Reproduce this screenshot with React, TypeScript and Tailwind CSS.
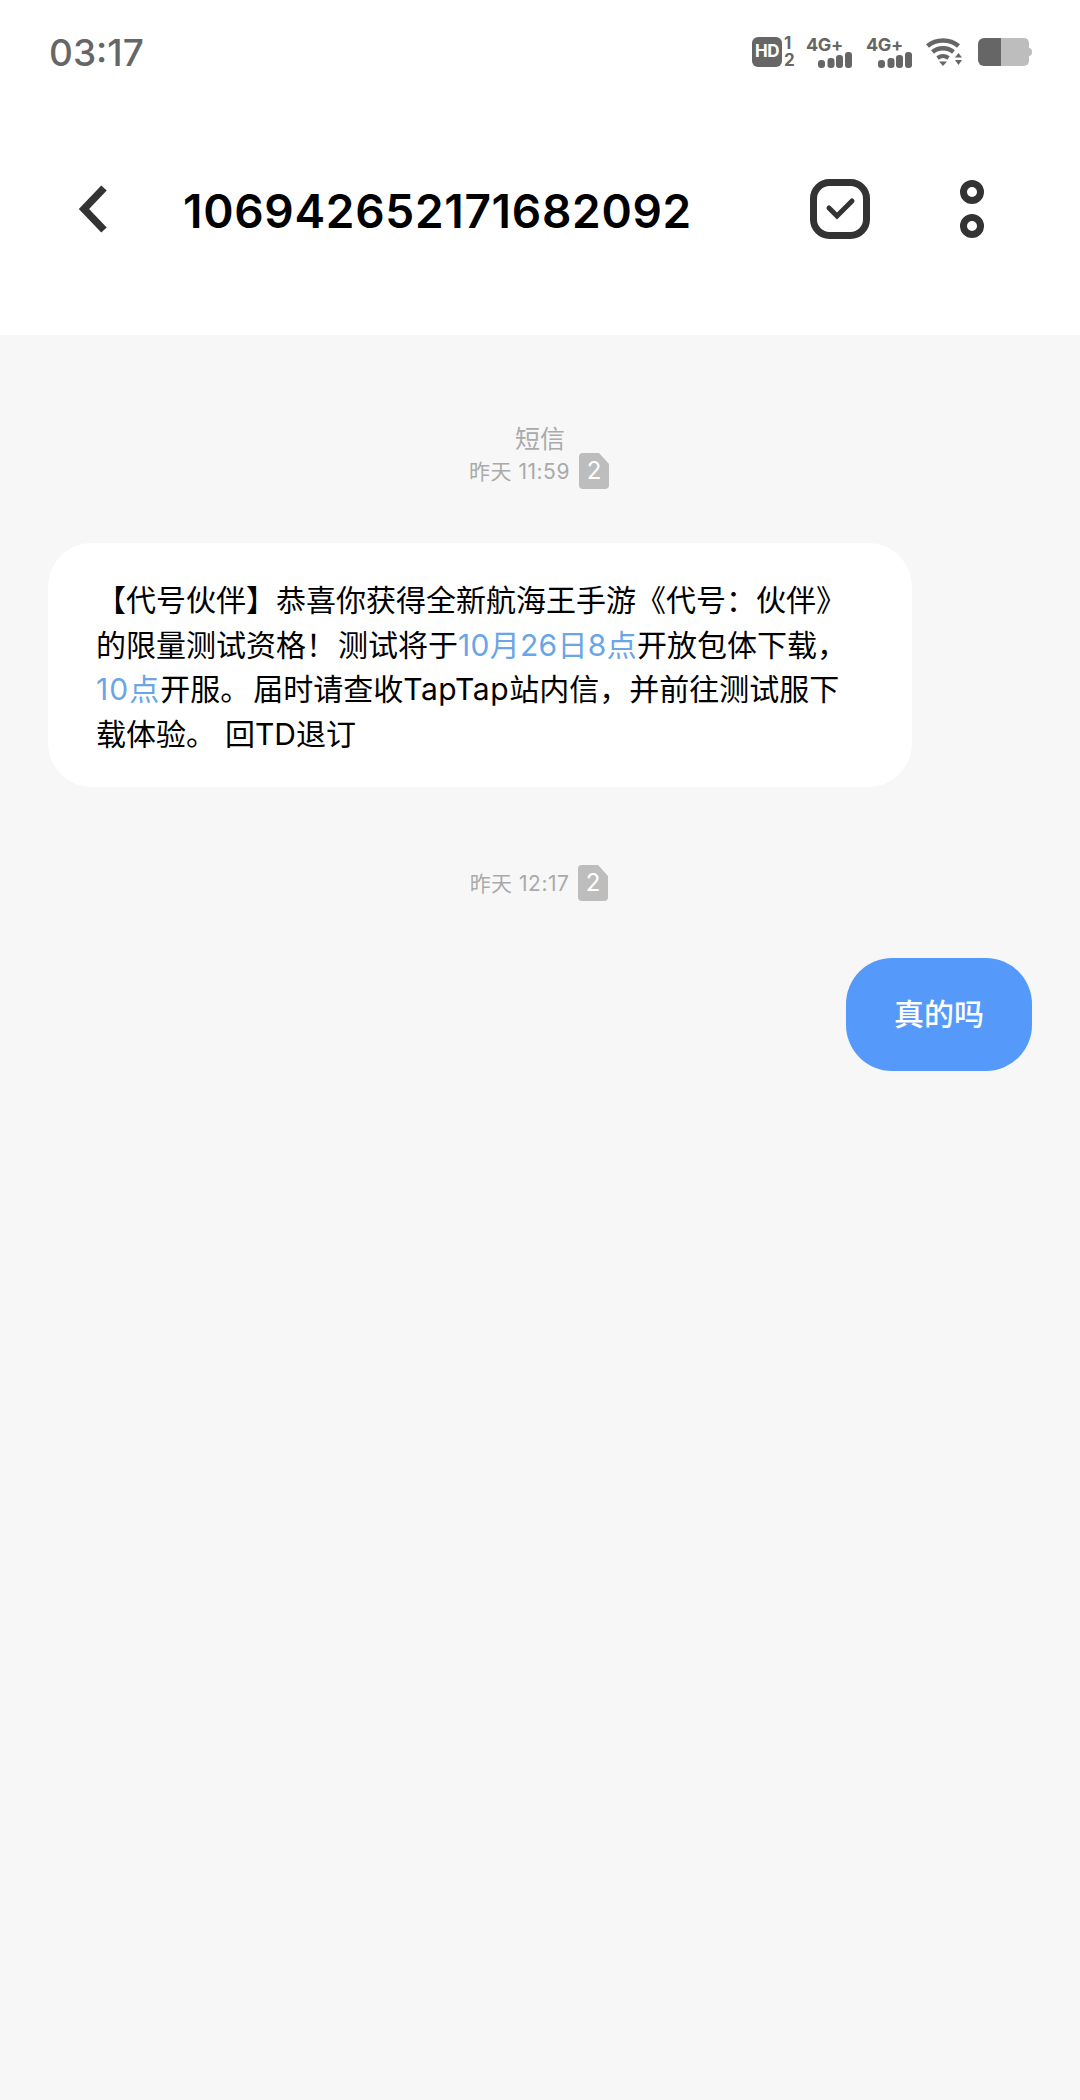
const cjk = "font-['Inter','Noto_Sans_CJK_SC',sans-serif] [text-spacing-trim:space-all]";

const SimBadge = () => (
  <svg width="30" height="36" viewBox="0 0 30 36" className="block">
    <path d="M4 0H20L30 11V32a4 4 0 0 1-4 4H4a4 4 0 0 1-4-4V4a4 4 0 0 1 4-4Z" fill="#bdbdbd" />
    <text x="15" y="26" textAnchor="middle" fontSize="24" fill="#fff" fontFamily="Inter, sans-serif">2</text>
  </svg>
);

const Signal = () => (
  <div className="flex flex-col w-[46px]">
    <span className="text-[18px] leading-[15px] font-bold text-[#666] font-['Inter',sans-serif] tracking-[-0.4px]">4G+</span>
    <svg width="46" height="16" viewBox="0 0 46 16" className="block">
      <rect x="12" y="8" width="7" height="8" rx="3" fill="#666" />
      <rect x="21.500" y="6" width="7" height="10" rx="3" fill="#666" />
      <rect x="30" y="3" width="7" height="13" rx="3" fill="#666" />
      <rect x="39" y="0" width="7" height="16" rx="3" fill="#666" />
    </svg>
  </div>
);

const StatusBar = () => (
  <div className="h-[104px] pl-[49px] pr-[48px] flex items-center justify-between bg-white">
    <span className="text-[37px] font-medium text-[#666] leading-none font-['Inter',sans-serif]">03:17</span>
    <div className="flex items-center">
      <div className="w-[30px] h-[30px] rounded-[6px] bg-[#666] text-white text-[17px] font-bold flex items-center justify-center font-['Inter',sans-serif] tracking-[-0.5px]">HD</div>
      <div className="w-[12px] ml-[2px] flex flex-col text-[17px] leading-[17px] font-bold text-[#666] font-['Inter',sans-serif]">
        <span>1</span>
        <span>2</span>
      </div>
      <div className="ml-[10px]"><Signal /></div>
      <div className="ml-[14px]"><Signal /></div>
      <svg width="38" height="28" viewBox="0 0 38 28" className="ml-[13px] block">
        <path d="M2.500 8C11 0.500 25 0.500 33.500 8" fill="none" stroke="#666" strokeWidth="4.500" />
        <path d="M7.500 14C13.500 9 22.500 9 28.500 14" fill="none" stroke="#666" strokeWidth="4.500" />
        <path d="M12.500 20C16 17.500 20 17.500 23.500 20" fill="none" stroke="#666" strokeWidth="4" />
        <path d="M14 23.500H22L18 28Z" fill="#666" />
        <path d="M33.500 15L37 19.500H30Z" fill="#666" />
        <path d="M30 22H37L33.500 27Z" fill="#666" />
      </svg>
      <svg width="54" height="28" viewBox="0 0 54 28" className="ml-[15px] block">
        <path d="M6 0H23V28H6a6 6 0 0 1-6-6V6a6 6 0 0 1 6-6Z" fill="#666" />
        <path d="M23 0H46a5 5 0 0 1 5 5V23a5 5 0 0 1-5 5H23Z" fill="#bdbdbd" />
        <path d="M51 10a3 4 0 0 1 3 4a3 4 0 0 1-3 4Z" fill="#bdbdbd" />
      </svg>
    </div>
  </div>
);

const Header = () => (
  <div className="h-[231px] pb-[22px] flex items-center bg-white">
    <svg width="32" height="48" viewBox="0 0 32 48" className="ml-[78px] block">
      <path d="M26 3L6 24L26 45" fill="none" stroke="#333" strokeWidth="7.500" />
    </svg>
    <h1 className="ml-[73px] mt-[4px] flex-1 text-[46px] leading-none font-semibold tracking-[0.7px] text-black font-['Inter',sans-serif]">106942652171682092</h1>
    <svg width="60" height="60" viewBox="0 0 60 60" className="block">
      <rect x="3.500" y="3.500" width="53" height="53" rx="16" fill="none" stroke="#333" strokeWidth="7" />
      <path d="M19 29L27 37L42 22" fill="none" stroke="#333" strokeWidth="5" strokeLinecap="round" />
    </svg>
    <svg width="24" height="58" viewBox="0 0 24 58" className="ml-[90px] mr-[96px] block">
      <circle cx="12" cy="12" r="8.500" fill="none" stroke="#333" strokeWidth="7" />
      <circle cx="12" cy="46" r="8.500" fill="none" stroke="#333" strokeWidth="7" />
    </svg>
  </div>
);

const Timestamp = ({ time }: { time: string }) => (
  <div className="flex items-center justify-center gap-[9px] h-[36px] pr-[2px]">
    <span className={`text-[21px] leading-none tracking-[0.5px] text-[#aaaaaa] ${cjk}`}>{time}</span>
    <SimBadge />
  </div>
);

export default function App() {
  return (
    <div className="w-[1080px] h-[2100px] bg-[#f7f7f7] overflow-hidden">
      <StatusBar />
      <Header />
      <main className="pt-[90px]">
        <p className={`text-center text-[25px] leading-[28px] text-[#aaaaaa] ${cjk}`}>短信</p>
        <Timestamp time="昨天 11:59" />
        <div className="mt-[54px] ml-[48px] w-[864px] h-[244px] bg-white rounded-[44px] pl-[48px] pt-[35px]">
          <p className={`text-[30px] leading-[44.5px] text-black whitespace-nowrap ${cjk}`}>
            【代号伙伴】恭喜你获得全新航海王手游《代号：伙伴》
            <br />
            的限量测试资格！<span className="ml-[2px]">测试将于</span><span className="text-[#6aa5e6] tracking-[0.3px]">10月26日8点</span>开放包体下载，
            <br />
            <span className="text-[#6aa5e6] tracking-[1px]">10点</span>开服。<span className="ml-[3px]">届时请查收</span><span className="tracking-[0.6px]">TapTap</span>站内信，并前往测试服下
            <br />
            载体验。<span className="ml-[9px]">回TD退订</span>
          </p>
        </div>
        <div className="mt-[78px]">
          <Timestamp time="昨天 12:17" />
        </div>
        <div className="mt-[57px] flex justify-end pr-[48px]">
          <div className={`w-[186px] h-[113px] rounded-[46px] bg-[#559afb] text-white text-[30px] font-medium flex items-center justify-center ${cjk}`}>
            真的吗
          </div>
        </div>
      </main>
    </div>
  );
}
